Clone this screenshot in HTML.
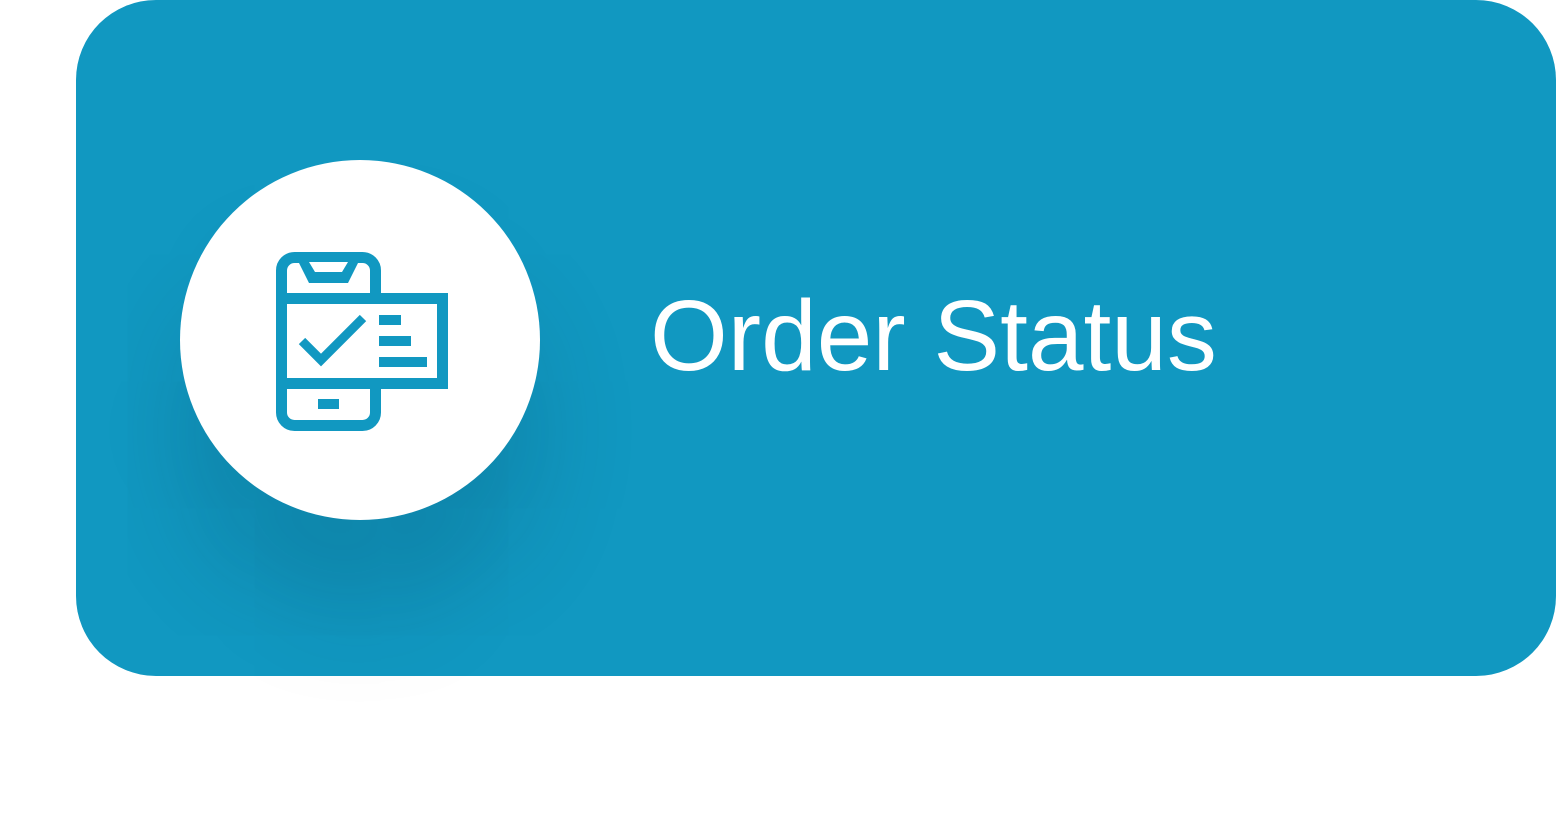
<!DOCTYPE html>
<html><head><meta charset="utf-8"><style>
html,body{margin:0;padding:0;background:#fff;width:1556px;height:824px;overflow:hidden;position:relative}
.card{position:absolute;left:76px;top:0;width:1480px;height:676px;background:#1198c1;border-radius:80px}
.circle{position:absolute;left:180px;top:160px;width:360px;height:360px;border-radius:50%;background:#fff;box-shadow:0 90px 100px rgba(0,40,60,0.17)}
.title{position:absolute;left:650px;top:286px;font:400 100px/100px "Liberation Sans",sans-serif;color:#fff;white-space:nowrap}
svg{position:absolute;left:0;top:0}
</style></head><body>
<div class="card"></div>
<div class="circle"></div>
<svg width="1556" height="824" viewBox="0 0 1556 824">
<g fill="none" stroke="#1198c1">
<rect x="281.5" y="257.5" width="94" height="168" rx="13" stroke-width="11"/>
</g>
<path d="M296 257 L361 257 L348 283 L309 283 Z" fill="#1198c1"/>
<path d="M309 262 L348 262 L342 272 L315 272 Z" fill="#fff"/>
<rect x="281.5" y="298.5" width="161" height="85" fill="#fff" stroke="#1198c1" stroke-width="11"/>
<path d="M302 341 L321 360 L363 318" fill="none" stroke="#1198c1" stroke-width="9"/>
<rect x="379" y="315" width="22" height="10" fill="#1198c1"/>
<rect x="379" y="336" width="32" height="10" fill="#1198c1"/>
<rect x="379" y="357" width="48" height="10" fill="#1198c1"/>
<rect x="318" y="399" width="21" height="10" fill="#1198c1"/>
</svg>
<div class="title">Order Status</div>
</body></html>
